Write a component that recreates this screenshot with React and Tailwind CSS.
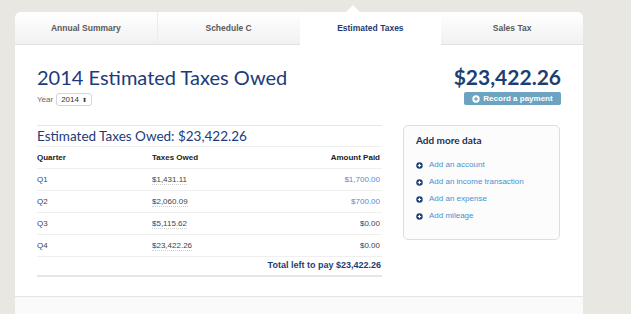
import React from 'react';

const tabs = ['Annual Summary', 'Schedule C', 'Estimated Taxes', 'Sales Tax'];

const rows = [
  { q: 'Q1', owed: '$1,431.11', paid: '$1,700.00', link: true },
  { q: 'Q2', owed: '$2,060.09', paid: '$700.00', link: true },
  { q: 'Q3', owed: '$5,115.62', paid: '$0.00', link: false },
  { q: 'Q4', owed: '$23,422.26', paid: '$0.00', link: false },
];

const links = ['Add an account', 'Add an income transaction', 'Add an expense', 'Add mileage'];

function PlusCircle({ className }) {
  return (
    <svg viewBox="0 0 10 10" className={className}>
      <circle cx="5" cy="5" r="4.6" fill="currentColor" />
      <rect x="2.6" y="4.2" width="4.8" height="1.6" fill="#fff" />
      <rect x="4.2" y="2.6" width="1.6" height="4.8" fill="#fff" />
    </svg>
  );
}

export default function App() {
  return (
    <div className="w-[631px] h-[314px] overflow-hidden bg-[#e9e7e1] pt-[12px] pl-[15px] font-['Liberation_Sans',Arial,sans-serif]">
      <div className="w-[568px] h-[310px] bg-white rounded-t-[6px] flex flex-col">
        {/* Tabs */}
        <div className="flex h-[33px] shrink-0">
          {tabs.map((t, i) => {
            const active = i === 2;
            return (
              <div
                key={t}
                className={
                  'relative flex-1 flex items-center justify-center text-[8.5px] font-bold ' +
                  (active
                    ? 'bg-white text-[#1f3a6e]'
                    : 'bg-gradient-to-b from-white to-[#f1f1f1] border-b border-[#e2e2e2] text-[#5a5a5a]') +
                  (i === 0 ? ' rounded-tl-[6px] border-r border-r-[#ececec]' : '') +
                  (i === 3 ? ' rounded-tr-[6px]' : '')
                }
              >
                {active && (
                  <div className="absolute -top-[7px] left-[46px] w-0 h-0 border-l-[7px] border-r-[7px] border-b-[7px] border-l-transparent border-r-transparent border-b-white" />
                )}
                {t}
              </div>
            );
          })}
        </div>

        {/* Main content */}
        <div className="px-[22px] pt-[19px] h-[251px] shrink-0">
          <div className="flex justify-between">
            <div>
              <h1 className="font-['Lato',sans-serif] text-[20px] leading-[24px] mt-[1px] mb-[1px] text-[#1c3b7a]">2014 Estimated Taxes Owed</h1>
              <div className="flex items-center mt-[4px] gap-[3px]">
                <span className="text-[8px] text-[#666]">Year</span>
                <div className="flex items-center justify-between w-[36px] h-[13px] border border-[#d6d6d6] rounded-[3px] px-[4px] text-[8px] text-[#333]">
                  <span>2014</span>
                  <span className="text-[6px] leading-none">⬍</span>
                </div>
              </div>
            </div>
            <div className="flex flex-col items-end">
              <div className="font-['Lato',sans-serif] font-bold text-[21px] leading-[25px] text-[#1d3e72]">$23,422.26</div>
              <button className="mt-[3px] w-[97px] h-[13px] rounded-[2px] bg-[#6ba3c0] flex items-center justify-center gap-[3px] text-white text-[8px] font-bold">
                <PlusCircle className="w-[8px] h-[8px] text-white [&_rect]:fill-[#6ba3c0]" />
                Record a payment
              </button>
            </div>
          </div>

          <div className="flex gap-[21px] mt-[19px]">
            {/* Left table */}
            <div className="w-[345px] border-t border-[#e6e6e6]">
              <div className="h-[21px] flex items-center border-b border-[#efefef] font-['Lato',sans-serif] text-[13.5px] text-[#1c3b7a]">
                Estimated Taxes Owed: $23,422.26
              </div>
              <div className="flex items-center h-[22px] border-b border-[#efefef] text-[8px] font-bold text-[#222] pr-[2px]">
                <div className="w-[115px]">Quarter</div>
                <div className="flex-1">Taxes Owed</div>
                <div>Amount Paid</div>
              </div>
              {rows.map((r) => (
                <div key={r.q} className="flex items-center h-[22px] border-b border-[#efefef] text-[8px] text-[#444] pr-[2px]">
                  <div className="w-[115px]">{r.q}</div>
                  <div className="flex-1">
                    <span className="border-b border-dotted border-[#cfcfcf]">{r.owed}</span>
                  </div>
                  <div className={r.link ? 'text-[#4a90d2]' : 'text-[#444]'}>{r.paid}</div>
                </div>
              ))}
              <div className="flex items-center justify-end h-[20px] border-b-2 border-[#e6e6e6] text-[9px] font-bold text-[#1d3e72] pr-[1px]">
                Total left to pay $23,422.26
              </div>
            </div>

            {/* Right box */}
            <div className="w-[157px] h-[115px] border border-[#dedede] rounded-[5px] bg-[#fcfcfc] pl-[12px] pt-[7px]">
              <div className="text-[10px] font-bold text-[#1d2f52] font-['Lato',sans-serif]">Add more data</div>
              <div className="mt-[11px] flex flex-col gap-[5px]">
                {links.map((l) => (
                  <div key={l} className="flex items-center h-[12px] gap-[6px] text-[8px] text-[#4a90d2]">
                    <PlusCircle className="w-[7px] h-[7px] text-[#1d3e72]" />
                    {l}
                  </div>
                ))}
              </div>
            </div>
          </div>
        </div>

        {/* Footer */}
        <div className="border-t border-[#e4e4e4] bg-[#fafafa] flex-1" />
      </div>
    </div>
  );
}
